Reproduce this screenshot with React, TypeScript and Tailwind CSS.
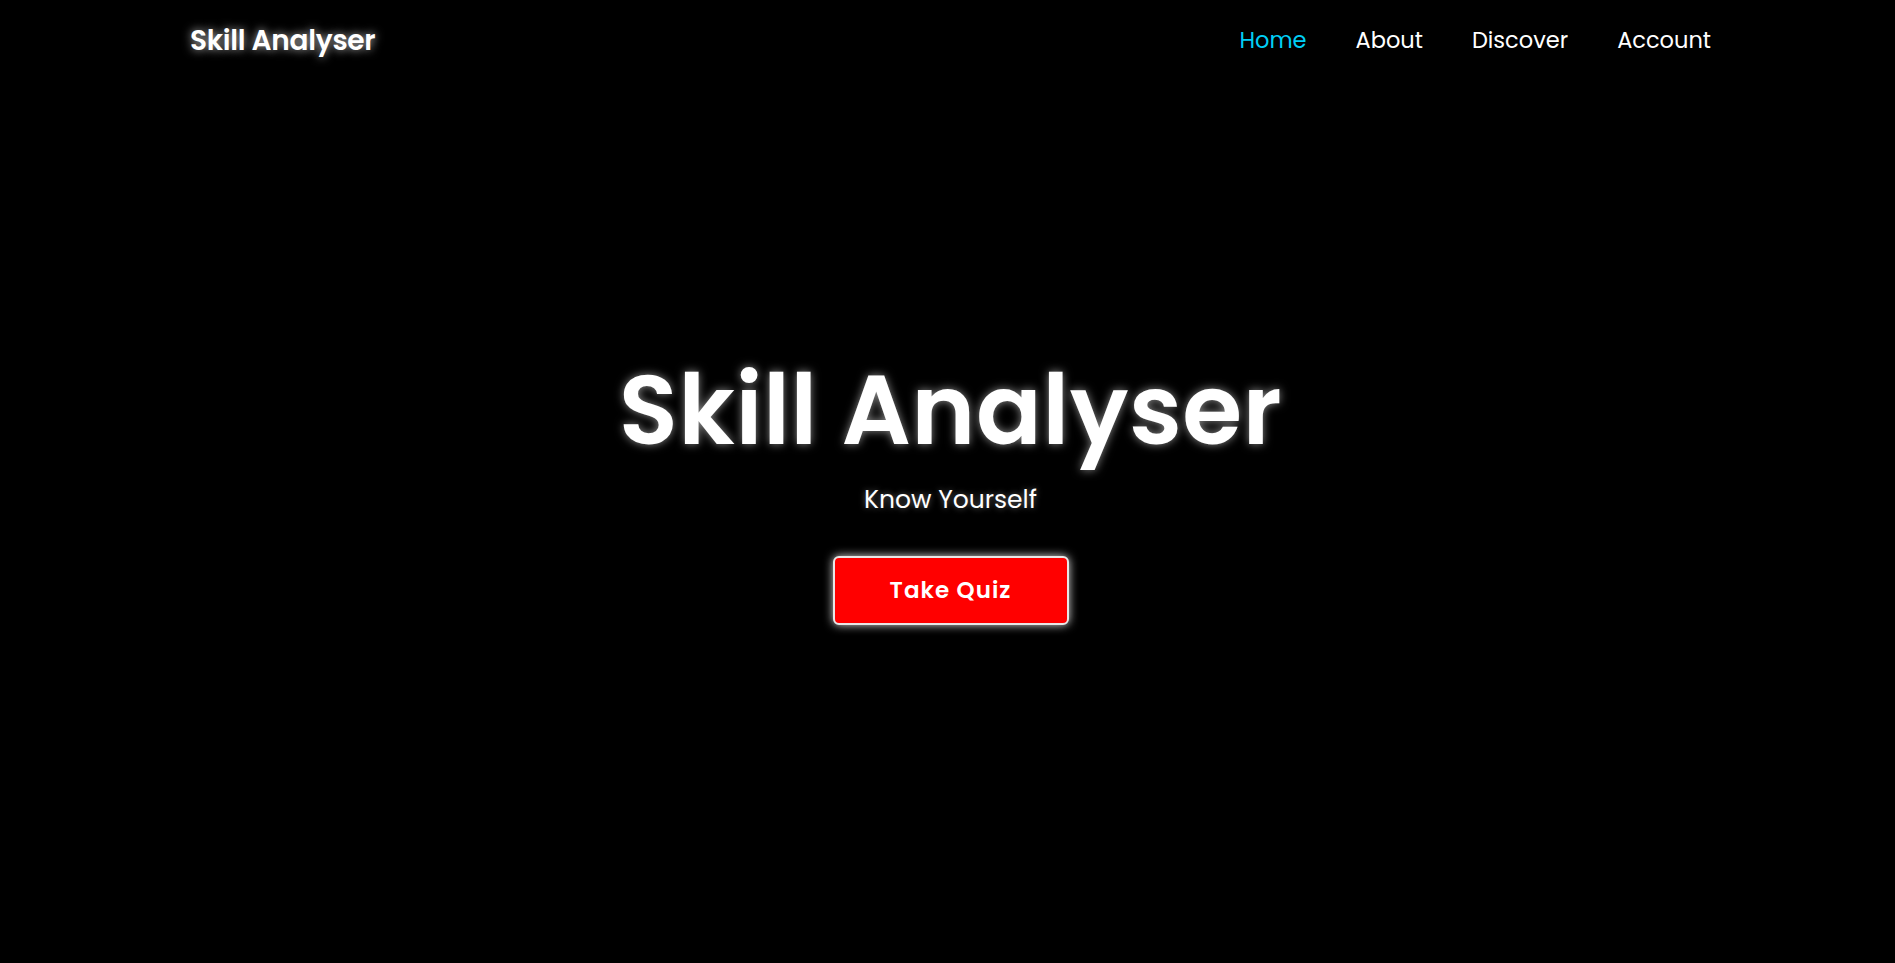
const NAV_LINKS = [
    { name: "Home", active: true },
    { name: "About", active: false },
    { name: "Discover", active: false },
    { name: "Account", active: false },
]

const App = () => {
    return <div className="min-h-screen w-full bg-black text-white font-['Poppins','Inter',sans-serif]">
        <nav className="flex h-[82px] items-center justify-between pl-[190px] pr-[184px]">
            <span className="text-[28px] font-semibold tracking-[-0.3px] [text-shadow:0_0_10px_rgba(255,255,255,0.75)]">
                Skill Analyser
            </span>
            <ul className="flex items-center gap-[49px] text-[22.5px] font-normal">
                {NAV_LINKS.map((link) => (
                    <li key={link.name}>
                        <a href="#" className={link.active ? "text-[#00cff6]" : "text-white"}>
                            {link.name}
                        </a>
                    </li>
                ))}
            </ul>
        </nav>

        <main className="flex h-[881px] flex-col items-center pl-[6px] pt-[280px]">
            <h1 className="text-[97px] font-semibold leading-none tracking-[0.5px] [text-shadow:0_0_10px_rgba(255,255,255,0.55)]">
                Skill Analyser
            </h1>
            <p className="mt-[28px] text-[25px] leading-none [text-shadow:0_0_6px_rgba(255,255,255,0.4)]">
                Know Yourself
            </p>
            <button className="mt-[44px] h-[69px] w-[236px] rounded-[6px] border-2 border-[#e8e8e8] bg-[#ff0000] text-[23px] font-semibold tracking-[1px] text-white shadow-[0_0_10px_rgba(255,255,255,0.85)]">
                Take Quiz
            </button>
        </main>
    </div>
}

export default App;
